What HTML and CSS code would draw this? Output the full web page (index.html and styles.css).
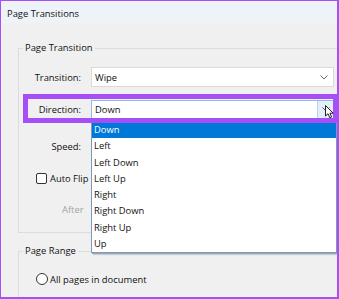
FILE: index.html
```html
<!DOCTYPE html>
<html>
<head>
<meta charset="utf-8">
<link rel="stylesheet" href="styles.css">
</head>
<body>
<div class="frame">
  <div class="titlebar">Page Transitions</div>
  <div class="content">
    <fieldset class="group group-transition">
      <legend>Page Transition</legend>
      <div class="row row-transition">
        <span class="label">Transition:</span>
        <div class="select">
          <span class="value">Wipe</span>
          <svg class="chevron" width="8" height="5" viewBox="0 0 8 5"><polyline points="0.5,0.5 4,4 7.5,0.5" fill="none" stroke="#666" stroke-width="1"/></svg>
        </div>
      </div>
      <div class="row row-direction">
        <span class="label">Direction:</span>
        <div class="select select-open">
          <span class="value">Down</span>
          <span class="drop-btn"><svg class="chevron" width="8" height="5" viewBox="0 0 8 5"><polyline points="0.5,0.5 4,4 7.5,0.5" fill="none" stroke="#555" stroke-width="1"/></svg></span>
          <ul class="listbox">
            <li class="selected">Down</li>
            <li>Left</li>
            <li>Left Down</li>
            <li>Left Up</li>
            <li>Right</li>
            <li>Right Down</li>
            <li>Right Up</li>
            <li>Up</li>
          </ul>
        </div>
      </div>
      <div class="row row-speed">
        <span class="label">Speed:</span>
        <div class="select"></div>
      </div>
      <div class="row row-check">
        <span class="checkbox"></span>
        <span>Auto Flip</span>
      </div>
      <div class="row row-after">
        <span class="muted">After</span>
      </div>
    </fieldset>
    <fieldset class="group group-range">
      <legend>Page Range</legend>
      <div class="row row-radio">
        <span class="radio"></span>
        <span>All pages in document</span>
      </div>
    </fieldset>
  </div>
  <div class="annotation"></div>
  <svg class="cursor" width="10" height="14" viewBox="0 0 10 14"><path d="M0.5 0.5 L0.5 11 L3 8.7 L4.8 12.8 L6.6 12 L4.9 8.2 L8.2 8.2 Z" fill="#fff" stroke="#222" stroke-width="1" stroke-linejoin="round"/></svg>
</div>
</body>
</html>
```

FILE: styles.css
```css
html, body {
  margin: 0;
  padding: 0;
  background: #f0f0f0;
}

.frame {
  position: relative;
  width: 339px;
  height: 299px;
  box-sizing: border-box;
  border-style: solid;
  border-color: #a64ff6;
  border-width: 1px 2px 2px 1px;
  background: #f0f0f0;
  overflow: hidden;
  font-family: "Open Sans", "Noto Sans", sans-serif;
  font-size: 9.4px;
  color: #111;
}

.titlebar {
  height: 24px;
  display: flex;
  align-items: center;
  padding-left: 6px;
  background: linear-gradient(#eef3f9 0%, #eef3f8 85%, #f0f0f0 100%);
}

.content {
  padding-left: 17px;
}

.group {
  margin: 15px 0 0 0;
  padding: 0;
  width: 340px;
  min-width: 0;
  border: 1px solid #dcdcdc;
}

.group legend {
  margin-left: 4px;
  padding: 0 2px;
  height: 16px;
  line-height: 16px;
}

.group-transition {
  padding-bottom: 13px;
}

.group-range {
  margin-top: 10px;
  height: 80px;
}

.row {
  display: grid;
  grid-template-columns: 62px 243px;
  column-gap: 10px;
  align-items: center;
  height: 20px;
}

.row-transition { margin-top: 11px; }
.row-direction { margin-top: 13px; height: 19px; }
.row-speed { margin-top: 17px; }
.row-check { margin-top: 12px; }
.row-after { margin-top: 11px; }
.row-radio { margin-top: 10px; }

.label {
  text-align: right;
}

.select {
  position: relative;
  box-sizing: border-box;
  height: 100%;
  background: #fff;
  border: 1px solid #dadada;
  display: flex;
  align-items: center;
  padding-left: 3px;
}

.select .value {
  flex: 1;
}

.select .chevron {
  margin-right: 5px;
}

.select-open {
  border-color: #8fbbe6;
}

.drop-btn {
  align-self: stretch;
  width: 15px;
  display: flex;
  align-items: center;
  justify-content: center;
  background: #e3eef9;
  border-left: 1px solid #b9d4ee;
}

.drop-btn .chevron {
  margin: 0;
}

.listbox {
  position: absolute;
  left: -1px;
  top: 20px;
  width: 244px;
  margin: 0;
  padding: 0;
  list-style: none;
  background: #fff;
  border: 1px solid #7d9bb8;
  box-shadow: 1px 1px 0 #9aa6b1, 2px 2px 1px rgba(0, 0, 0, 0.15);
  z-index: 2;
}

.listbox li {
  height: 16.25px;
  line-height: 16.25px;
  padding-left: 2px;
}

.listbox li.selected {
  background: #0078d7;
  color: #fff;
}

.row-check,
.row-radio {
  display: flex;
  column-gap: 0;
  padding-left: 17px;
}

.checkbox {
  width: 11px;
  height: 11px;
  box-sizing: border-box;
  border: 1px solid #333;
  border-radius: 2px;
  background: #fff;
  margin-right: 3px;
}

.radio {
  width: 12px;
  height: 12px;
  box-sizing: border-box;
  border: 1px solid #333;
  border-radius: 50%;
  background: #fff;
  margin-right: 2px;
}

.row-after {
  display: flex;
  column-gap: 0;
  padding-left: 43px;
}

.muted {
  color: #a3a3a3;
}

.annotation {
  position: absolute;
  left: 22px;
  top: 93px;
  width: 315px;
  height: 29px;
  box-sizing: border-box;
  border: 5px solid #a64ff6;
  z-index: 3;
}

.cursor {
  position: absolute;
  left: 324px;
  top: 104px;
  z-index: 4;
}
```
